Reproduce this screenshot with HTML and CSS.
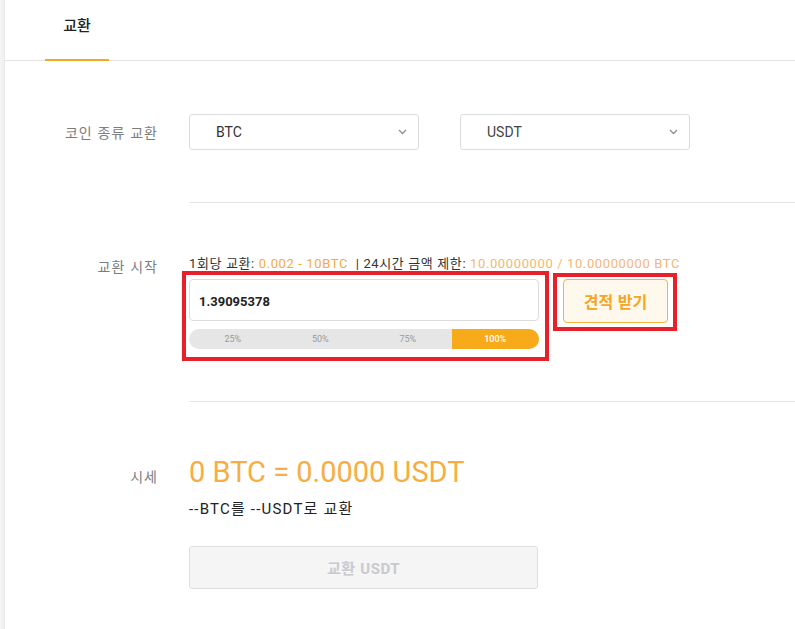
FILE: index.html
```html
<!DOCTYPE html>
<html lang="ko">
<head>
<meta charset="utf-8">
<title>교환</title>
<link rel="stylesheet" href="styles.css">
</head>
<body>
<div class="page">
  <div class="edge"></div>
  <main class="main">
    <header class="tabs">
      <div class="tab active">교환</div>
    </header>

    <section class="row row-coin">
      <div class="label">코인 종류 교환</div>
      <div class="field selects">
        <div class="select">
          <span class="select-value">BTC</span>
          <svg class="chevron" width="9" height="6" viewBox="0 0 9 6"><path d="M1 1l3.5 3.5L8 1" fill="none" stroke="#8a8f99" stroke-width="1.3"/></svg>
        </div>
        <div class="select">
          <span class="select-value usdt">USDT</span>
          <svg class="chevron" width="9" height="6" viewBox="0 0 9 6"><path d="M1 1l3.5 3.5L8 1" fill="none" stroke="#8a8f99" stroke-width="1.3"/></svg>
        </div>
      </div>
    </section>

    <div class="divider"></div>

    <section class="row row-start">
      <div class="label">교환 시작</div>
      <div class="field">
        <div class="info">1회당 교환:&nbsp;<span class="hl">0.002 - 10BTC</span>&nbsp; | 24시간 금액 제한:&nbsp;<span class="hl2">10.00000000 / 10.00000000 BTC</span></div>
        <div class="quote-line">
          <div class="amount-group">
            <div class="amount-input">1.39095378</div>
            <div class="slider">
              <span class="seg">25%</span>
              <span class="seg">50%</span>
              <span class="seg">75%</span>
              <span class="seg on">100%</span>
            </div>
            <div class="mark mark-amount"></div>
          </div>
          <div class="quote-wrap">
            <button class="quote-btn">견적 받기</button>
            <div class="mark mark-quote"></div>
          </div>
        </div>
      </div>
    </section>

    <div class="divider divider-2"></div>

    <section class="row row-rate">
      <div class="label label-rate">시세</div>
      <div class="field">
        <div class="rate">0 BTC = 0.0000 USDT</div>
        <div class="rate-sub">--BTC를 --USDT로 교환</div>
        <button class="swap-btn">교환 <b>USDT</b></button>
      </div>
    </section>
  </main>
</div>
</body>
</html>
```
FILE: styles.css
```css
* { box-sizing: border-box; }
html, body { margin: 0; padding: 0; background: #fff; }
body {
  font-family: Roboto, "Noto Sans CJK KR", "Noto Sans", sans-serif;
  color: #333;
  overflow: hidden;
  font-variant-ligatures: none;
}
.page { display: flex; min-height: 629px; }
.edge {
  width: 5px;
  flex: none;
  background: linear-gradient(to right, #f4f4f4, #f0f0f0 70%, #e6e6e6);
}
.main { flex: 1; min-width: 0; }

.tabs {
  height: 61px;
  border-bottom: 1px solid #e3e3e3;
  display: flex;
  align-items: flex-end;
  padding-left: 40px;
}
.tab {
  width: 64px;
  height: 61px;
  margin-bottom: -1px;
  text-align: center;
  padding-top: 15px;
  font-family: "Noto Sans CJK KR", sans-serif;
  font-size: 15px;
  line-height: 20px;
  color: #222;
  font-weight: 500;
}
.tab.active { border-bottom: 2px solid #f5a623; }

.row {
  display: grid;
  grid-template-columns: 152px 1fr;
  column-gap: 32px;
}
.label {
  text-align: right;
  font-family: "Noto Sans CJK KR", sans-serif;
  font-size: 14px;
  letter-spacing: 1px;
  margin-right: -1px;
  color: #7d7d7d;
}
.row-coin { margin-top: 53px; }
.row-coin .label { line-height: 36px; }
.selects { display: flex; gap: 41px; }
.select {
  width: 230px;
  height: 36px;
  border: 1px solid #dcdcdc;
  border-radius: 3px;
  display: flex;
  align-items: center;
  justify-content: space-between;
  padding: 0 11px 0 26px;
  font-size: 14px;
  color: #333;
}
.select-value.usdt { color: #444; }
.chevron { display: block; }

.divider {
  margin: 52px 0 0 184px;
  height: 1px;
  background: #e6e6e6;
}

.row-start { margin-top: 53px; }
.row-start .label { line-height: 16px; padding-top: 2px; }
.info {
  font-size: 13px;
  line-height: 16px;
  color: #333;
  white-space: nowrap;
  letter-spacing: 0.62px;
}
.info .hl { color: #f6ab3e; }
.info .hl2 { color: #f6b676; }
.quote-line {
  margin-top: 7px;
  display: flex;
  gap: 24px;
  align-items: flex-start;
}
.amount-group { position: relative; width: 350px; }
.amount-input {
  height: 42px;
  border: 1px solid #dcdcdc;
  border-radius: 4px;
  padding: 3px 0 0 9px;
  font-size: 13px;
  font-weight: 700;
  line-height: 38px;
  color: #222;
}
.slider {
  margin-top: 8px;
  height: 20px;
  border-radius: 10px;
  background: #e6e6e6;
  display: flex;
  overflow: hidden;
}
.seg {
  flex: 1;
  text-align: center;
  font-size: 9px;
  line-height: 20px;
  color: #9a9a9a;
}
.seg.on { background: #f7ab1b; color: #fff; font-weight: 500; }

.quote-wrap { position: relative; }
.quote-btn {
  width: 105px;
  height: 44px;
  margin: 0;
  border: 1px solid #f5b540;
  border-radius: 4px;
  background: #fff8ec;
  color: #f5a623;
  font-family: "Noto Sans CJK KR", sans-serif;
  font-size: 16px;
  font-weight: 700;
  padding: 0;
}

.mark {
  position: absolute;
  border: 4.5px solid #e8202a;
  pointer-events: none;
}
.mark-amount { top: -8px; left: -7px; right: -10px; bottom: -12px; }
.mark-quote { top: -6px; left: -10px; right: -9px; bottom: -8px; }

.row-rate { margin-top: 52px; }
.label-rate { line-height: 36px; padding-top: 4px; }
.rate {
  font-size: 29px;
  line-height: 36px;
  color: #f7ad42;
  font-weight: 400;
}
.rate-sub {
  margin-top: 9px;
  font-size: 15px;
  line-height: 20px;
  color: #222;
  letter-spacing: 1.2px;
}
.swap-btn {
  margin-top: 27px;
  display: block;
  width: 349px;
  height: 43px;
  border: 1px solid #dedede;
  border-radius: 3px;
  background: #f5f5f5;
  color: #c9c9cf;
  font-family: "Noto Sans CJK KR", sans-serif;
  font-size: 15px;
  font-weight: 700;
  letter-spacing: 0.5px;
  padding: 0;
}
.swap-btn b { font-family: Roboto, sans-serif; font-weight: 700; }
```
